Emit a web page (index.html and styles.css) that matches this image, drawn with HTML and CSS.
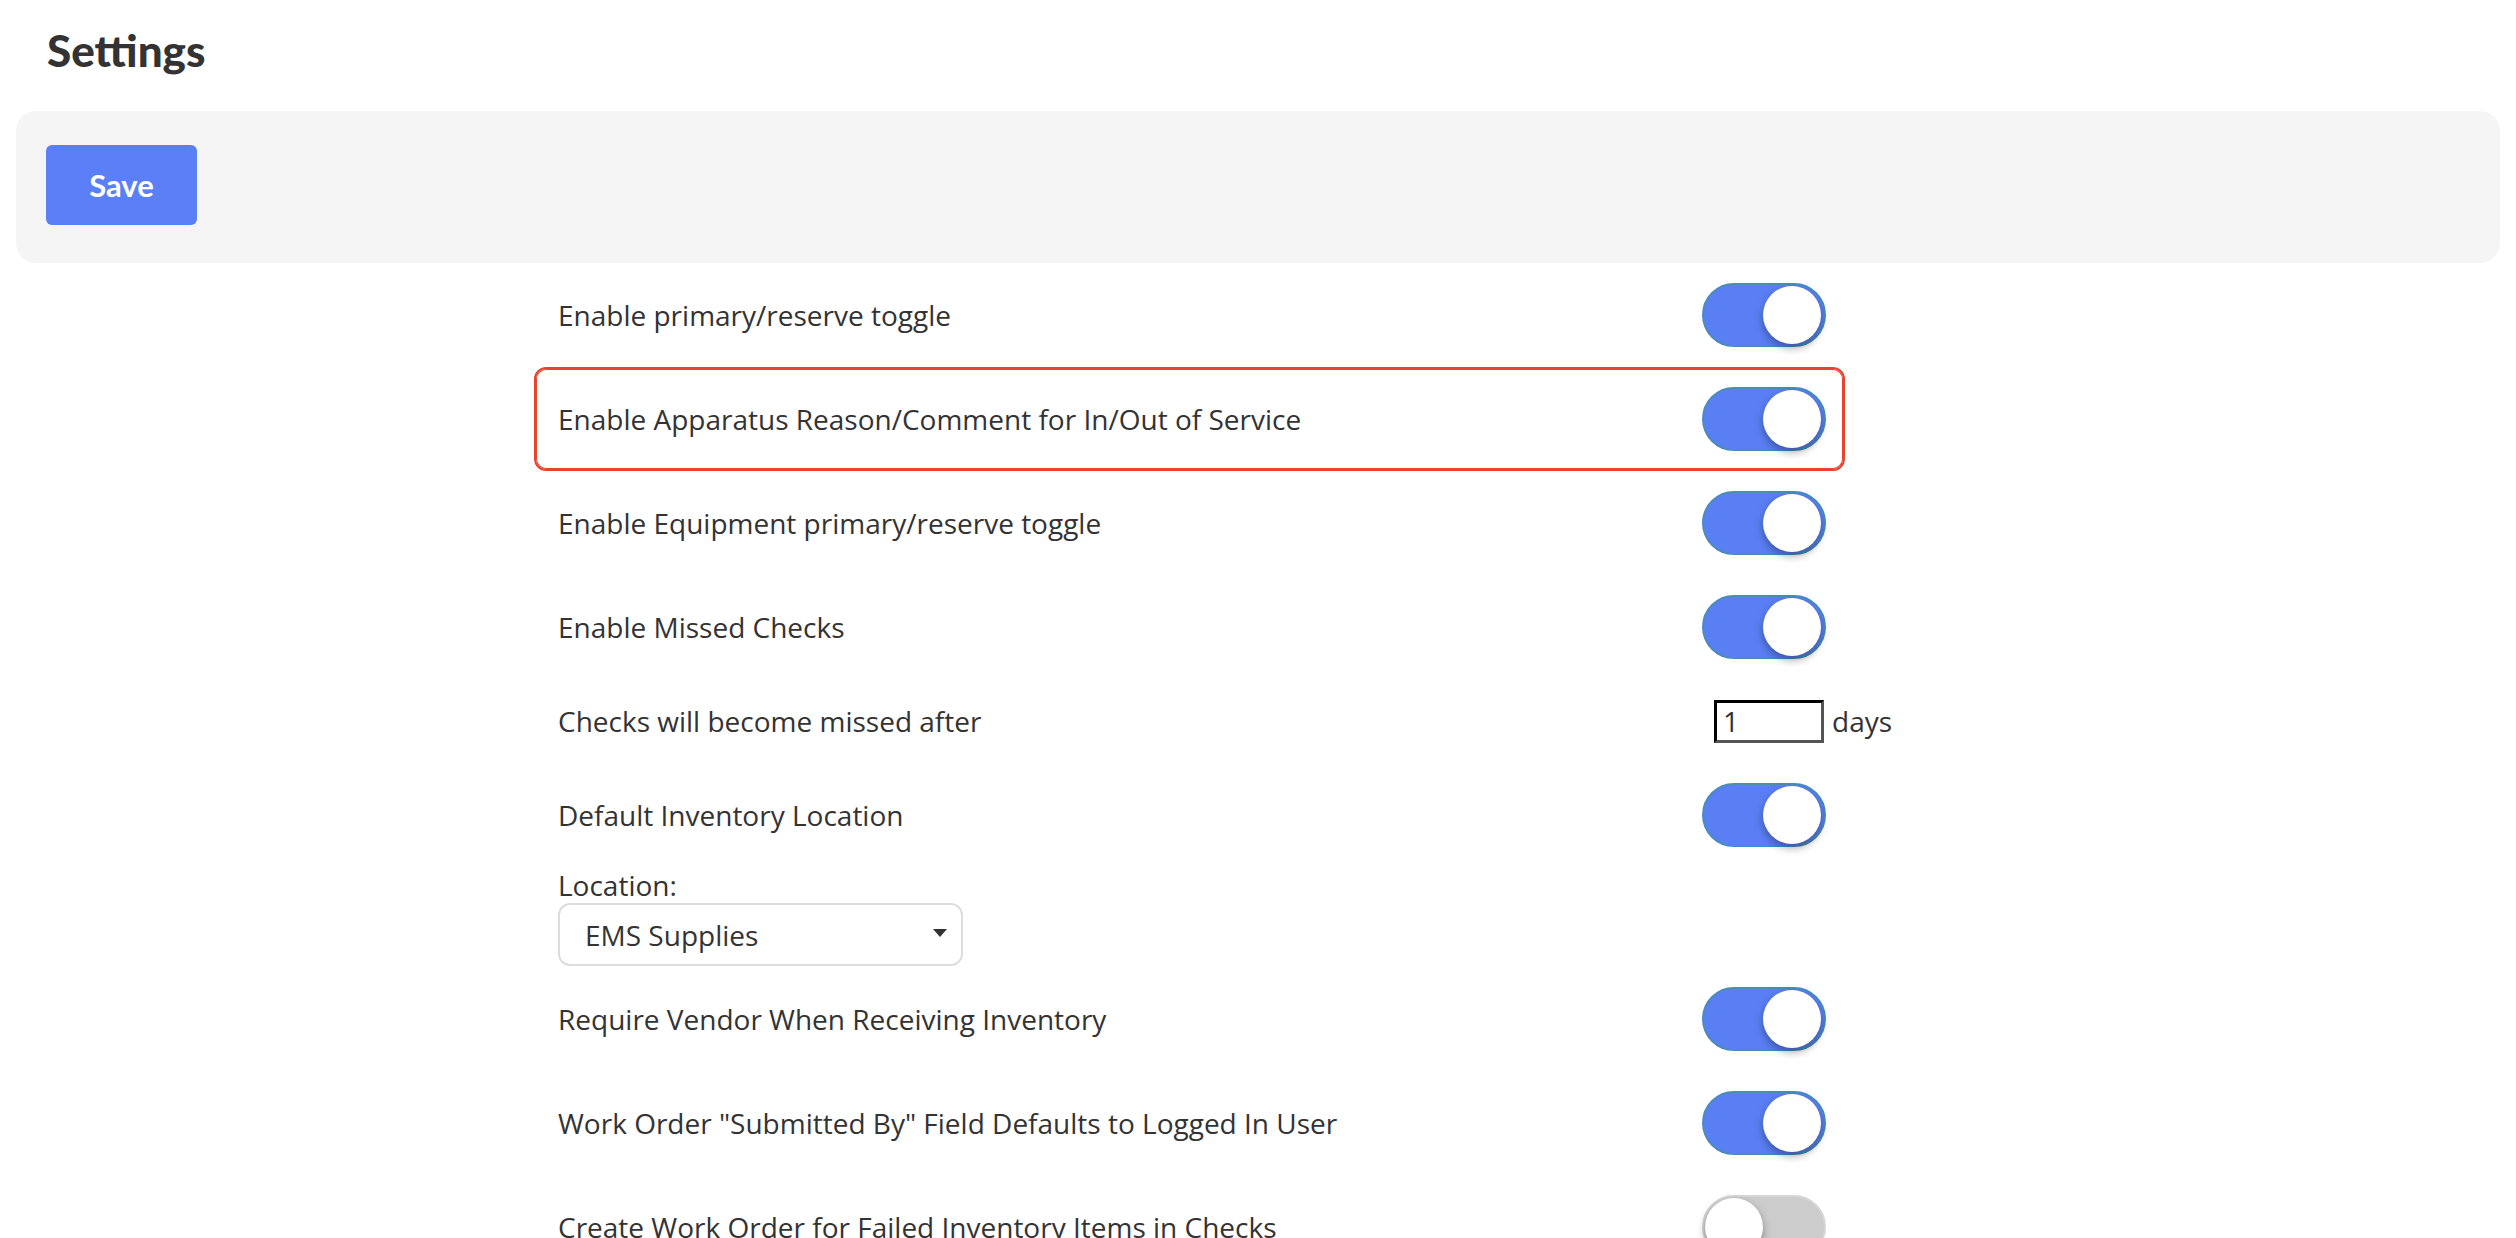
FILE: index.html
```html
<!DOCTYPE html>
<html lang="en">
<head>
    <meta charset="UTF-8">
    <meta name="viewport" content="width=device-width, initial-scale=1.0">
    <title>Settings</title>
    <link rel="stylesheet" href="styles.css">
</head>
<body>

<h1 class="page-title">Settings</h1>

<div class="toolbar">
    <button class="btn-save">Save</button>
</div>

<div class="settings-list">
    <div class="setting-row">
        <span class="setting-label">Enable primary/reserve toggle</span>
        <label class="switch"><input type="checkbox" checked><span class="slider"></span></label>
    </div>
    <div class="setting-row highlighted">
        <span class="setting-label">Enable Apparatus Reason/Comment for In/Out of Service</span>
        <label class="switch"><input type="checkbox" checked><span class="slider"></span></label>
    </div>
    <div class="setting-row">
        <span class="setting-label">Enable Equipment primary/reserve toggle</span>
        <label class="switch"><input type="checkbox" checked><span class="slider"></span></label>
    </div>
    <div class="setting-row">
        <span class="setting-label">Enable Missed Checks</span>
        <label class="switch"><input type="checkbox" checked><span class="slider"></span></label>
    </div>
    <div class="setting-row short">
        <span class="setting-label">Checks will become missed after</span>
        <div class="control">
            <div class="days-field">
                <input type="text" class="days-input" value="1">
                <span>days</span>
            </div>
        </div>
    </div>
    <div class="setting-row">
        <span class="setting-label">Default Inventory Location</span>
        <label class="switch"><input type="checkbox" checked><span class="slider"></span></label>
    </div>
    <div class="location-block">
        <label class="location-label">Location:</label>
        <div class="select-wrap">
            <select class="location-select">
                <option>EMS Supplies</option>
            </select>
        </div>
    </div>
    <div class="setting-row">
        <span class="setting-label">Require Vendor When Receiving Inventory</span>
        <label class="switch"><input type="checkbox" checked><span class="slider"></span></label>
    </div>
    <div class="setting-row">
        <span class="setting-label">Work Order "Submitted By" Field Defaults to Logged In User</span>
        <label class="switch"><input type="checkbox" checked><span class="slider"></span></label>
    </div>
    <div class="setting-row">
        <span class="setting-label">Create Work Order for Failed Inventory Items in Checks</span>
        <label class="switch"><input type="checkbox"><span class="slider"></span></label>
    </div>
</div>

</body>
</html>
```

FILE: styles.css
```css
body {
    font-family: "Open Sans", Arial, sans-serif;
    color: #333;
    margin: 0;
    background: #fff;
}
.page-title {
    font-family: Lato, "Open Sans", sans-serif;
    font-weight: 900;
    font-size: 44px;
    line-height: 52px;
    margin: 24px 0 35px 47px;
    color: #333;
}
.toolbar {
    background-color: #f5f5f5;
    border-radius: 20px;
    margin: 0 16px;
    height: 152px;
    box-sizing: border-box;
    padding: 34px 30px;
}
.btn-save {
    font-family: Lato, "Open Sans", sans-serif;
    font-weight: 700;
    font-size: 31px;
    color: #fff;
    background-color: #5b7ff7;
    border: none;
    border-radius: 6px;
    width: 151px;
    height: 80px;
    cursor: pointer;
}
.btn-save:hover {
    background-color: #4a6fe6;
}
.settings-list {
    width: 1311px;
    margin-left: 534px;
}
.setting-row {
    display: flex;
    align-items: center;
    justify-content: space-between;
    height: 104px;
    box-sizing: border-box;
    padding: 0 17px 0 22px;
    border: 2px solid transparent;
    border-radius: 12px;
}
.setting-row.highlighted {
    border-color: #e8432d;
    box-shadow: inset 0 0 0 1px #e8432d;
}
.setting-row.short {
    height: 84px;
}
.setting-label {
    font-size: 28px;
}
.control {
    width: 124px;
}
.days-field {
    display: flex;
    align-items: center;
    margin-left: 12px;
    white-space: nowrap;
    font-size: 28px;
}
.days-input {
    width: 110px;
    height: 43px;
    box-sizing: border-box;
    border-style: solid;
    border-width: 3px;
    border-color: #000 #555 #555 #000;
    font-family: "Open Sans", Arial, sans-serif;
    font-size: 28px;
    color: #333;
    padding: 0 6px;
    margin-right: 8px;
}
.switch {
    position: relative;
    display: inline-block;
    width: 124px;
    height: 64px;
}
.switch input {
    opacity: 0;
    width: 0;
    height: 0;
}
.slider {
    position: absolute;
    inset: 0;
    background-color: #ccc;
    border: 2px solid #d6d6d6;
    border-radius: 32px;
    cursor: pointer;
}
.slider::before {
    content: "";
    position: absolute;
    width: 58px;
    height: 58px;
    left: 1px;
    top: 1px;
    background-color: #fff;
    border-radius: 50%;
    box-shadow: 0 4px 9px rgba(0, 0, 0, 0.35);
}
.switch input:checked + .slider {
    background-color: #5a7ff5;
    border-color: #4a8cbc;
}
.switch input:checked + .slider::before {
    left: 59px;
}
.location-block {
    padding: 0 19px 1px 24px;
}
.location-label {
    display: block;
    font-size: 28px;
    line-height: 36px;
}
.select-wrap {
    position: relative;
    width: 405px;
}
.select-wrap::after {
    content: "";
    position: absolute;
    right: 16px;
    top: 26px;
    border-left: 7px solid transparent;
    border-right: 7px solid transparent;
    border-top: 8px solid #333;
    pointer-events: none;
}
.location-select {
    appearance: none;
    -webkit-appearance: none;
    width: 405px;
    height: 63px;
    border: 2px solid #ddd;
    border-radius: 12px;
    background: #fff;
    padding: 0 25px;
    font-family: "Open Sans", Arial, sans-serif;
    font-size: 28px;
    color: #333;
}
```
